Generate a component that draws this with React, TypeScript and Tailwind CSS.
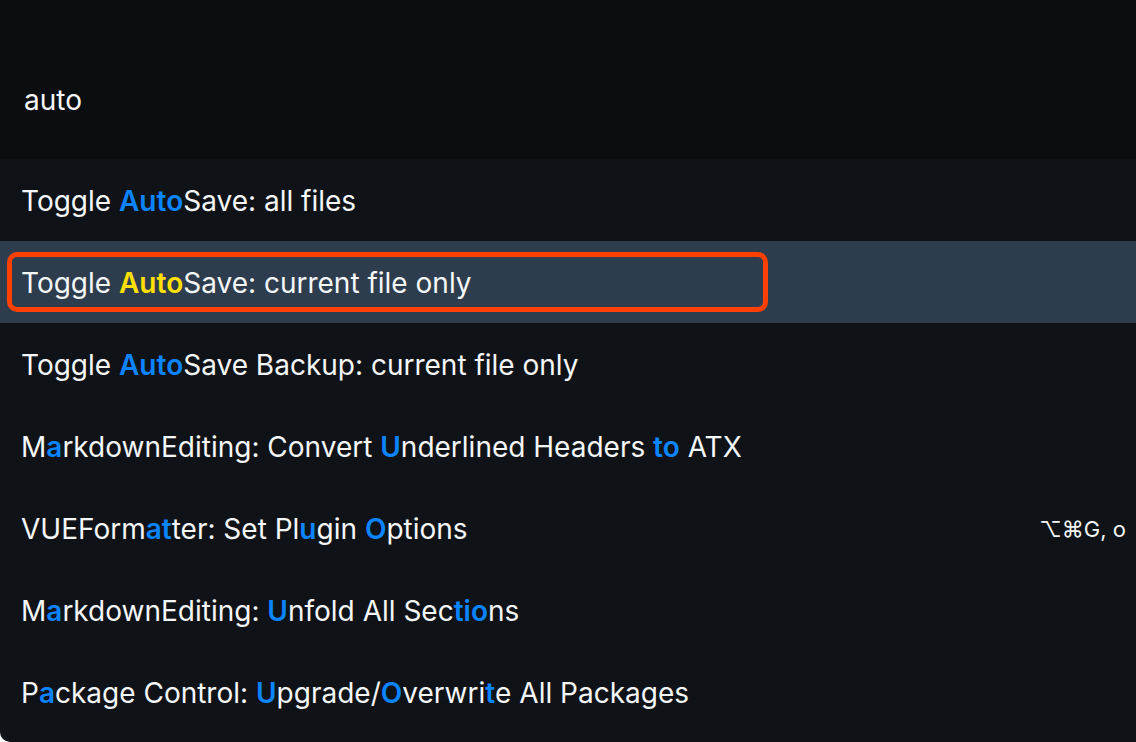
import React from "react";

type Seg = { t: string; h?: boolean };

const rows: { segs: Seg[]; selected?: boolean; shortcut?: string }[] = [
  { segs: [{ t: "Toggle " }, { t: "Auto", h: true }, { t: "Save: all files" }] },
  { segs: [{ t: "Toggle " }, { t: "Auto", h: true }, { t: "Save: current file only" }], selected: true },
  { segs: [{ t: "Toggle " }, { t: "Auto", h: true }, { t: "Save Backup: current file only" }] },
  {
    segs: [
      { t: "M" }, { t: "a", h: true }, { t: "rkdownEditing: Convert " }, { t: "U", h: true },
      { t: "nderlined Headers " }, { t: "to", h: true }, { t: " ATX" },
    ],
  },
  {
    segs: [
      { t: "VUEForm" }, { t: "at", h: true }, { t: "ter: Set Pl" }, { t: "u", h: true },
      { t: "gin " }, { t: "O", h: true }, { t: "ptions" },
    ],
    shortcut: "⌥⌘G, o",
  },
  {
    segs: [
      { t: "M" }, { t: "a", h: true }, { t: "rkdownEditing: " }, { t: "U", h: true },
      { t: "nfold All Sec" }, { t: "tio", h: true }, { t: "ns" },
    ],
  },
  {
    segs: [
      { t: "P" }, { t: "a", h: true }, { t: "ckage Control: " }, { t: "U", h: true },
      { t: "pgrade/" }, { t: "O", h: true }, { t: "verwri" }, { t: "t", h: true }, { t: "e All Packages" },
    ],
  },
];

function Label({ segs, hl }: { segs: Seg[]; hl: string }) {
  return (
    <div className="whitespace-pre">
      {segs.map((s, j) =>
        s.h ? (
          <span key={j} className={hl}>
            {s.t}
          </span>
        ) : (
          <span key={j}>{s.t}</span>
        )
      )}
    </div>
  );
}

export default function App() {
  return (
    <div
      className="w-[1136px] h-[742px] overflow-hidden bg-[#0f1317] text-[#f4f6f8] flex flex-col rounded-bl-[10px]"
      style={{ fontFamily: "Inter, 'Noto Sans', sans-serif" }}
    >
      <div className="h-[159px] shrink-0 bg-[#0b0e11] flex items-center px-[24px] text-[28px] pt-[40px]">
        auto
      </div>
      <div className="flex flex-col text-[28px]">
        {rows.map((r, i) =>
          r.selected ? (
            <div key={i} className="h-[82px] shrink-0 bg-[#2e3d4d] flex items-center px-[7px]">
              <div className="w-[761px] h-[60px] border-[5px] border-[#ff4000] rounded-[10px] flex items-center pl-[9px] pt-[2px]">
                <Label segs={r.segs} hl="font-semibold text-[#ffe000]" />
              </div>
            </div>
          ) : (
            <div key={i} className="h-[82px] shrink-0 flex items-center pl-[21px] pr-[10px] pt-[2px]">
              <div className="flex-1">
                <Label segs={r.segs} hl="font-semibold text-[#0a84ff]" />
              </div>
              {r.shortcut && <div className="text-[22px]">{r.shortcut}</div>}
            </div>
          )
        )}
      </div>
    </div>
  );
}
